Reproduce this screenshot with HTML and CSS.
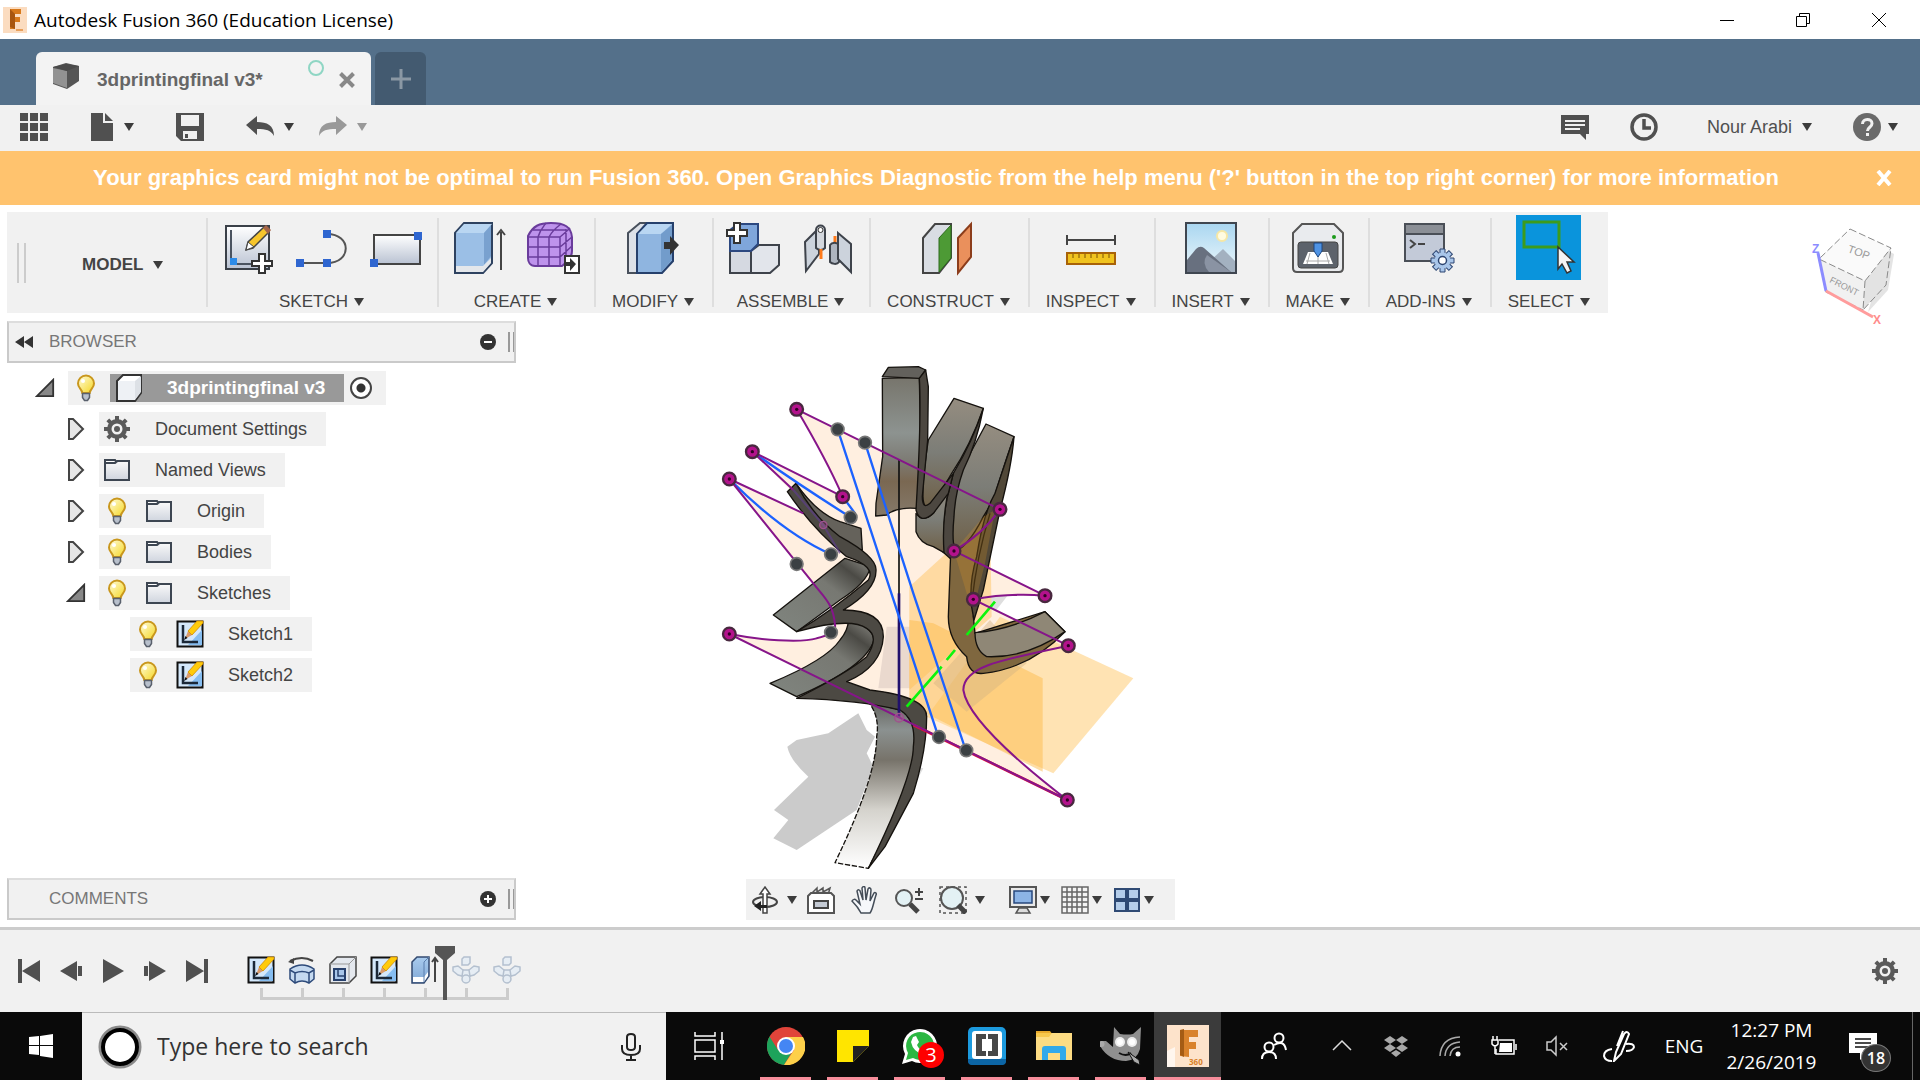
FILE: index.html
```html
<!DOCTYPE html>
<html lang="en">
<head>
    <meta charset="UTF-8">
    <meta name="viewport" content="width=device-width, initial-scale=1.0">
    <title>Autodesk Fusion 360 (Education License)</title>
    <link rel="stylesheet" href="styles.css">
</head>
<body>
    <!-- shared icons and gradients -->
    <svg class="defs" aria-hidden="true">
        <defs>
            <linearGradient id="gBlue" x1="0" y1="0" x2="0" y2="1"><stop offset="0" stop-color="#a9cbee"/><stop offset="1" stop-color="#82a9d6"/></linearGradient>
            <linearGradient id="gPaper" x1="0" y1="0" x2="0" y2="1"><stop offset="0" stop-color="#ffffff"/><stop offset="1" stop-color="#b9c2d2"/></linearGradient>
            <linearGradient id="gSky" x1="0" y1="0" x2="0" y2="1"><stop offset="0" stop-color="#a9d6f0"/><stop offset="1" stop-color="#eef8fc"/></linearGradient>
            <linearGradient id="gBulb" x1="0" y1="0" x2="1" y2="1"><stop offset="0" stop-color="#fffde0"/><stop offset="1" stop-color="#f5d620"/></linearGradient>
            <linearGradient id="gSteel" x1="0" y1="0" x2="0" y2="1"><stop offset="0" stop-color="#77756c"/><stop offset="0.4" stop-color="#8d9390"/><stop offset="0.6" stop-color="#7d7b74"/><stop offset="0.75" stop-color="#7a6852"/><stop offset="1" stop-color="#85796a"/></linearGradient>
            <linearGradient id="gTrunk" x1="0" y1="0" x2="0" y2="1"><stop offset="0" stop-color="#62625d"/><stop offset="0.17" stop-color="#8b9190"/><stop offset="0.35" stop-color="#77736a"/><stop offset="0.65" stop-color="#d5d3cd"/><stop offset="1" stop-color="#ffffff"/></linearGradient>
            <linearGradient id="gFace" x1="0" y1="1" x2="1" y2="0"><stop offset="0" stop-color="#80857f"/><stop offset="0.6" stop-color="#777872"/><stop offset="0.8" stop-color="#4b4a45"/><stop offset="1" stop-color="#908f89"/></linearGradient>
            <linearGradient id="gWood" x1="0" y1="0" x2="0" y2="1"><stop offset="0" stop-color="#958d80"/><stop offset="0.5" stop-color="#7c7d77"/><stop offset="1" stop-color="#6f6047"/></linearGradient>
        </defs>
        <symbol id="caret" viewBox="0 0 10 8"><path d="M0 0h10L5 8z" fill="currentColor"/></symbol>
        <symbol id="bulb" viewBox="0 0 20 28">
            <path d="M10 1.500a8 8 0 0 0-8 8c0 4.500 3.800 5.500 4.300 9.500h7.400c.5-4 4.300-5 4.300-9.500a8 8 0 0 0-8-8z" fill="url(#gBulb)" stroke="#c9971d" stroke-width="2"/>
            <path d="M6.500 19.500h7v4l-2 3h-3l-2-3z" fill="#b8c0cc" stroke="#59606c" stroke-width="1.500"/>
            <circle cx="7" cy="7" r="2" fill="#fff"/>
        </symbol>
        <symbol id="folder" viewBox="0 0 28 26">
            <path d="M2 6V3h10l2 3" fill="#fff" stroke="#3d4652" stroke-width="2"/>
            <path d="M2 6h10l2-2h12v19H2z" fill="url(#gPaper)" fill-opacity=".6" stroke="#3d4652" stroke-width="2"/>
        </symbol>
        <symbol id="gear" viewBox="0 0 28 28">
            <g fill="currentColor"><path d="M12 1h4v26h-4zM1 12h26v4H1z"/><path d="M12 1h4v26h-4zM1 12h26v4H1z" transform="rotate(45 14 14)"/><circle cx="14" cy="14" r="10"/></g>
            <circle cx="14" cy="14" r="5.500" fill="#f1f1f1"/><circle cx="14" cy="14" r="3" fill="currentColor"/>
        </symbol>
        <symbol id="sketch" viewBox="0 0 28 28">
            <rect x="1.500" y="1.500" width="25" height="25" fill="#d4e8fb" stroke="#111" stroke-width="2"/>
            <path d="M26 10v15H12z" fill="#86bdf0"/>
            <path d="M7 5v17h15" fill="none" stroke="#1b2838" stroke-width="2.500"/>
            <path d="M9 19l3-8 4 4z" fill="#d99a6a"/><path d="M12 11L21 1l6 0v2L16 15z" fill="#ffcb0a" stroke="#d08a00" stroke-width=".8"/><path d="M8 20l1.500-4 2 2z" fill="#111"/>
        </symbol>
        <symbol id="arrowClosed" viewBox="0 0 18 24"><path d="M2 2h4l10 10L6 22H2z" fill="#e6e6e6" stroke="#444" stroke-width="2"/></symbol>
        <symbol id="arrowOpen" viewBox="0 0 22 22"><path d="M20 2v18H2z" fill="#888" stroke="#333" stroke-width="2"/></symbol>
        <symbol id="joint" viewBox="0 0 28 28"><g fill="#e6edf4" stroke="#b4c0cf" stroke-width="1.500"><path d="M10 14h8v6h-8z"/><path d="M10 3l2-2h6v6l-2 2h-6zM1 11l5-1 5 4-1 6-4-1-5-4zM27 11l-5-1-5 4 1 6 4-1 5-4z"/><circle cx="14" cy="23" r="4"/></g></symbol>
    </svg>

    <header class="titlebar">
        <svg class="app-logo" viewBox="0 0 24 26"><rect width="24" height="26" fill="#fbdcc0"/><path d="M7 2h11v5h-6v3h5v5h-5v7H7z" fill="#d87a1c"/><path d="M7 2l5 5v15l-5-2z" fill="#a8560f"/><path d="M13 23h7" stroke="#e8a05c" stroke-width="2"/></svg>
        <h1 class="title">Autodesk Fusion 360 (Education License)</h1>
        <div class="window-buttons">
            <button type="button" aria-label="Minimize"><svg viewBox="0 0 16 16"><path d="M1 8.500h14"/></svg></button>
            <button type="button" aria-label="Restore"><svg viewBox="0 0 16 16"><path d="M1.500 4.500h10v10h-10zM4.500 4V1.500h10v10H12"/></svg></button>
            <button type="button" aria-label="Close"><svg viewBox="0 0 16 16"><path d="M1 1l14 14M15 1L1 15"/></svg></button>
        </div>
    </header>

    <nav class="tabs">
        <div class="tab">
            <svg class="tab-cube" viewBox="0 0 28 26"><path d="M1 4l13-4 13 3v15l-12 8L1 21z" fill="#555"/><path d="M1 5l14 3v17L1 20z" fill="#929292"/><path d="M1 4l13-3 13 2-12 5z" fill="#4a4a4a"/></svg>
            <span class="tab-name">3dprintingfinal v3*</span>
            <span class="tab-status"></span>
            <button type="button" class="tab-close" aria-label="Close tab"><svg viewBox="0 0 16 16"><path d="M1.500 1.500l13 13M14.500 1.500l-13 13"/></svg></button>
        </div>
        <button type="button" class="tab-add" aria-label="New tab"><svg viewBox="0 0 20 20"><path d="M10 0v20M0 10h20"/></svg></button>
    </nav>

    <div class="quickbar">
        <button type="button" aria-label="Data panel"><svg class="i28" viewBox="0 0 28 28"><path d="M0 0h8v8H0zM10 0h8v8h-8zM20 0h8v8h-8zM0 10h8v8H0zM10 10h8v8h-8zM20 10h8v8h-8zM0 20h8v8H0zM10 20h8v8h-8zM20 20h8v8h-8z"/></svg></button>
        <button type="button" class="file" aria-label="File"><svg class="i24" viewBox="0 0 24 28"><path d="M1 0h12v10h10v18H1z"/><path d="M15 0l8 8h-8z"/></svg><svg class="caret"><use href="#caret"/></svg></button>
        <button type="button" aria-label="Save"><svg class="i28" viewBox="0 0 28 28"><path fill-rule="evenodd" d="M0 0h28v28H5l-5-5zM5 2v11h18V2zM7 18v8h14v-8z"/><path d="M9 21h3v4H9z"/></svg></button>
        <div class="history">
            <button type="button" aria-label="Undo"><svg class="i28" viewBox="0 0 28 28"><path d="M0 12l11-9v6c10 0 17 3 17 14-3-6-8-7-17-7v6z"/></svg><svg class="caret"><use href="#caret"/></svg></button>
            <button type="button" class="faded" aria-label="Redo"><svg class="i28" viewBox="0 0 28 28"><path d="M28 12L17 3v6C7 9 0 12 0 23c3-6 8-7 17-7v6z"/></svg><svg class="caret"><use href="#caret"/></svg></button>
        </div>
        <div class="account">
            <button type="button" aria-label="Comments"><svg class="i28" viewBox="0 0 28 28"><path d="M0 2h28v19h-3v6l-6-6H0z"/><path d="M4 8h20M4 12h20M4 16h15" stroke="#f1f1f1" stroke-width="2"/></svg></button>
            <button type="button" aria-label="Job status"><svg class="i28" viewBox="0 0 28 28"><circle cx="14" cy="14" r="12" fill="none" stroke="currentColor" stroke-width="3.500"/><path d="M14 6v9h7" fill="none" stroke="currentColor" stroke-width="3.500"/></svg></button>
            <button type="button" class="user">Nour Arabi<svg class="caret"><use href="#caret"/></svg></button>
            <button type="button" class="help" aria-label="Help"><svg class="i28" viewBox="0 0 28 28"><circle cx="14" cy="14" r="14" fill="#6a6a6a"/><path d="M9.500 11c0-6 9.500-6 9.500-.5 0 4-4.500 3.500-4.500 7.500" fill="none" stroke="#f1f1f1" stroke-width="3"/><path d="M13 20h3v3h-3z" fill="#f1f1f1"/></svg><svg class="caret"><use href="#caret"/></svg></button>
        </div>
    </div>

    <div class="banner" role="alert">
        <p>Your graphics card might not be optimal to run Fusion 360. Open Graphics Diagnostic from the help menu ('?' button in the top right corner) for more information</p>
        <button type="button" aria-label="Dismiss"><svg viewBox="0 0 16 16"><path d="M2 1l12 14M14 1L2 15"/></svg></button>
    </div>

    <div class="ribbon-row">
        <div class="ribbon">
            <div class="workspace-switch">
                <span class="grip"></span>
                <button type="button" class="model">MODEL<svg class="caret"><use href="#caret"/></svg></button>
            </div>
            <section class="group">
                <div class="tools">
                    <button type="button" aria-label="Create Sketch"><svg viewBox="0 0 52 52"><rect x="4" y="4" width="43" height="43" fill="url(#gPaper)" stroke="#3a4048" stroke-width="2"/><path d="M9 8v34h25" fill="none" stroke="#4a5360" stroke-width="2"/><path d="M8 36h7v7H8z" fill="#2c8be8"/><path d="M24 28l2-8L42 5l5 5-16 16z" fill="#f6c52c" stroke="#444" stroke-width="1.500"/><path d="M24 28l2-8 6 5z" fill="#fff" stroke="#444"/><path d="M41 6l3-3 5 5-3 4z" fill="#a5664a"/><path d="M37 32h6v7h7v5h-7v7h-6v-7h-7v-5h7z" fill="#fff" stroke="#333" stroke-width="2"/></svg></button>
                    <button type="button" aria-label="Line"><svg viewBox="0 0 52 52"><path d="M4 41h27c25 0 25-29 0-29" fill="none" stroke="#555" stroke-width="2"/><path d="M0 37h8v8H0zM27 37h8v8h-8zM27 8h8v8h-8z" fill="#2f66d0"/></svg></button>
                    <button type="button" aria-label="Rectangle"><svg viewBox="0 0 52 52"><rect x="4" y="13" width="46" height="29" fill="url(#gPaper)" stroke="#444" stroke-width="2"/><path d="M44 10h8v8h-8zM0 37h8v8H0z" fill="#2f66d0"/></svg></button>
                </div>
                <button type="button" class="menu">SKETCH<svg class="caret"><use href="#caret"/></svg></button>
            </section>
            <section class="group">
                <div class="tools">
                    <button type="button" aria-label="Extrude"><svg viewBox="0 0 52 52"><path d="M2 11l9-10h28v40L30 51H2z" fill="#9bbfe6" stroke="#2e4260" stroke-width="2"/><path d="M3 11h28l8-9H11z" fill="#b9d6f2"/><path d="M31 11v32l7-9V3z" fill="#79a1cf"/><path d="M3 44h27l8-8v5l-8 9H3z" fill="#e4e7eb"/><path d="M48 48V10M44 13l4-5 4 5" fill="none" stroke="#444" stroke-width="2"/></svg></button>
                    <button type="button" aria-label="Create Form"><svg viewBox="0 0 52 52"><path d="M1 14C6 4 12 1 24 1c14 0 20 4 21 14v14c0 6-6 12-10 15H8c-5 0-7-4-7-8z" fill="#be93ec" stroke="#6a3c9c" stroke-width="2"/><path d="M1 15h32v29M11 15v29M22 15v29M1 25h32l12-10M1 35h32l12-11M11 15c2-7 5-10 8-14M22 15c3-6 8-10 12-13M6 8h33M33 15c5-4 8-7 10-9M39 7v31" fill="none" stroke="#6a3c9c" stroke-width="1.500"/><rect x="38" y="34" width="14" height="17" fill="#fff" stroke="#333" stroke-width="2"/><path d="M38 40h5v-4l6 6-6 7v-5h-5z" fill="#333"/></svg></button>
                </div>
                <button type="button" class="menu">CREATE<svg class="caret"><use href="#caret"/></svg></button>
            </section>
            <section class="group">
                <div class="tools">
                    <button type="button" aria-label="Press Pull"><svg viewBox="0 0 52 52"><path d="M1 11L13 1h8v50H1z" fill="#dde1e8" stroke="#48505c" stroke-width="2"/><path d="M10 12L20 1h26v38L35 51H10z" fill="#8fb5e0" stroke="#26406c" stroke-width="2"/><path d="M11 12h23L45 2H21z" fill="#b9d6f2"/><path d="M34 12v38l11-12V3z" fill="#729ccb"/><path d="M37 20h6v-6l9 9-9 10v-6h-6z" fill="#333"/></svg></button>
                </div>
                <button type="button" class="menu">MODIFY<svg class="caret"><use href="#caret"/></svg></button>
            </section>
            <section class="group">
                <div class="tools">
                    <button type="button" aria-label="New Component"><svg viewBox="0 0 52 52"><path d="M2 29h21v22H2z" fill="#d5d9e1" stroke="#3e434b" stroke-width="2"/><path d="M23 29l8-6h20v20l-9 8H23z" fill="#e2e5eb" stroke="#3e434b" stroke-width="2"/><path d="M2 8l8-6h20v20l-7 7H2z" fill="#7fa6db" stroke="#2c4880" stroke-width="2"/><path d="M6 1h6v7h7v6h-7v7H6v-7h-7V8h7z" fill="#fff" stroke="#333" stroke-width="2"/></svg></button>
                    <button type="button" aria-label="Joint"><svg viewBox="0 0 52 52"><path d="M3 20l14-14v26L4 49z" fill="#ccd3dc" stroke="#3e434b" stroke-width="2"/><path d="M14 8c0-6 9-6 9 0v18c-3 3-7 2-9 0z" fill="#d3d7dd" stroke="#3e434b" stroke-width="2"/><circle cx="18.500" cy="8" r="2.500" fill="#fff" stroke="#333"/><path d="M19 27v10M33 14v12" stroke="#ff7a1a" stroke-width="3"/><path d="M28 23c2-3 7-3 9 0v17c-2 3-7 2-9 0z" fill="#aeb5bf" stroke="#3e434b" stroke-width="2"/><path d="M36 11l13 11v28L36 37z" fill="#ccd3dc" stroke="#3e434b" stroke-width="2"/></svg></button>
                </div>
                <button type="button" class="menu">ASSEMBLE<svg class="caret"><use href="#caret"/></svg></button>
            </section>
            <section class="group">
                <div class="tools">
                    <button type="button" aria-label="Offset Plane"><svg viewBox="0 0 52 52"><path d="M1 16L13 2h16v34L17 51H1z" fill="#d9dde3" stroke="#444" stroke-width="2"/><path d="M17 16L29 3v33L17 50z" fill="#4d9a35" stroke="#2c6a1c"/><path d="M36 16L49 2v33L36 51z" fill="#ea905c" stroke="#8c3d1b" stroke-width="2"/></svg></button>
                </div>
                <button type="button" class="menu">CONSTRUCT<svg class="caret"><use href="#caret"/></svg></button>
            </section>
            <section class="group">
                <div class="tools">
                    <button type="button" aria-label="Measure"><svg viewBox="0 0 52 52"><path d="M2 18h48M2 13v10M50 13v10" stroke="#444" stroke-width="2"/><rect x="2" y="31" width="48" height="11" fill="#f0c31f" stroke="#a86208" stroke-width="2"/><path d="M8 32v4M14 32v4M20 32v4M26 32v4M32 32v4M38 32v4M44 32v4" stroke="#7a5205"/></svg></button>
                </div>
                <button type="button" class="menu">INSPECT<svg class="caret"><use href="#caret"/></svg></button>
            </section>
            <section class="group">
                <div class="tools">
                    <button type="button" aria-label="Decal"><svg viewBox="0 0 52 52"><rect x="1" y="1" width="50" height="50" fill="url(#gSky)" stroke="#3f4650" stroke-width="2"/><circle cx="37" cy="14" r="5" fill="#fffbe0" stroke="#f6e7a5" stroke-width="2"/><path d="M24 40l14-13 12 12v11H24z" fill="#a3b1c0"/><path d="M2 38l9-11q4-4 8-1l27 24H2z" fill="#68707f"/><path d="M22 33q-6 8 2 17h22z" fill="#8a93a3"/></svg></button>
                </div>
                <button type="button" class="menu">INSERT<svg class="caret"><use href="#caret"/></svg></button>
            </section>
            <section class="group">
                <div class="tools">
                    <button type="button" aria-label="3D Print"><svg viewBox="0 0 52 52"><path d="M1 11l9-9h32l9 9v35q0 4-4 4H5q-4 0-4-4z" fill="#e9ebee" stroke="#555" stroke-width="2"/><rect x="6" y="20" width="40" height="26" rx="3" fill="#5c626b" stroke="#444"/><path d="M16 30h20l5 12H11z" fill="#fff"/><path d="M14 39h24M18 31l-3 11M26 31v11M34 31l3 11" stroke="#aaa"/><path d="M22 21h8v8l-4 6-4-6z" fill="#4f93e4" stroke="#1c4680"/><circle cx="42" cy="15" r="2" fill="#1a9a1a"/></svg></button>
                </div>
                <button type="button" class="menu">MAKE<svg class="caret"><use href="#caret"/></svg></button>
            </section>
            <section class="group">
                <div class="tools">
                    <button type="button" aria-label="Scripts and Add-Ins"><svg viewBox="0 0 52 52"><rect x="2" y="2" width="39" height="37" fill="#c3cad8" stroke="#4a4f57" stroke-width="2"/><path d="M3 3h37v8H3z" fill="#8b8f96"/><path d="M3 12h37" stroke="#4a4f57" stroke-width="2"/><path d="M7 18l5 4-5 4M15 22h7" fill="none" stroke="#444" stroke-width="2"/><g fill="#a9c6ea" stroke="#2c4470"><path d="M37 27h5v23h-5zM28 36h23v5H28z"/><path d="M37 27h5v23h-5zM28 36h23v5H28z" transform="rotate(45 39.500 38.500)"/></g><circle cx="39.500" cy="38.500" r="8" fill="#a9c6ea"/><circle cx="39.500" cy="38.500" r="4" fill="#fff" stroke="#2c4470" stroke-width="1.500"/></svg></button>
                </div>
                <button type="button" class="menu">ADD-INS<svg class="caret"><use href="#caret"/></svg></button>
            </section>
            <section class="group">
                <div class="tools">
                    <button type="button" class="active" aria-label="Select"><svg viewBox="0 0 52 52"><rect x="1" y="0" width="35" height="25" fill="none" stroke="#3d9b1d" stroke-width="3"/><path d="M35 25v22l4-5 5 9 4-2-4-9h7z" fill="#f4f4f4" stroke="#333" stroke-width="1.500"/></svg></button>
                </div>
                <button type="button" class="menu">SELECT<svg class="caret"><use href="#caret"/></svg></button>
            </section>
        </div>

        <svg class="viewcube" viewBox="1808 224 96 104">
            <path d="M1885 250l8 4-6 36-20 22z" fill="#e4e4e4"/>
            <path d="M1849 229l41 19-26 33-46-22z" fill="#fafafa"/><path d="M1818 259l46 22-2 29-37-18z" fill="#f1f1f1"/><path d="M1890 248l-26 33-2 29 23-25z" fill="#e3e3e3"/>
            <path d="M1849 229l41 19-26 33-46-22zM1864 281l-2 29 23-25 5-37M1818 259l7 33 37 18" fill="none" stroke="#8a8a8a" stroke-dasharray="7 3"/>
            <path d="M1817 253l8 38" stroke="#8c8cff" stroke-width="3"/><path d="M1825 291l47 26" stroke="#ff9c9c" stroke-width="3"/>
            <text x="1846" y="252" transform="rotate(20 1846 252)" fill="#999">TOP</text>
            <text x="1828" y="282" transform="rotate(27 1828 282)" class="small" fill="#999">FRONT</text>
            <text x="1811" y="253" class="axis" fill="#8c8cff">Z</text><text x="1872" y="324" class="axis" fill="#ff8c8c">X</text>
        </svg>
    </div>

    <main class="workspace">
        <aside class="side">
            <div class="panel">
                <button type="button" aria-label="Collapse"><svg class="rewind" viewBox="0 0 18 12"><path d="M9 0v12L0 6zM18 0v12L9 6z"/></svg></button>
                <h2>BROWSER</h2>
                <button type="button" aria-label="Minus"><svg class="i16" viewBox="0 0 16 16"><circle cx="8" cy="8" r="8"/><path d="M4 8h8" stroke="#fff" stroke-width="2"/></svg></button>
                <span class="panel-grip"></span>
            </div>
            <ul class="tree">
                <li class="level0">
                    <button type="button" class="toggle" aria-label="Collapse"><svg class="open"><use href="#arrowOpen"/></svg></button>
                    <div class="node root">
                        <svg class="bulb"><use href="#bulb"/></svg>
                        <span class="selected"><svg class="i28" viewBox="0 0 28 28"><path d="M2 7l6-6h18v18l-6 8H2z" fill="#fff" stroke="#333" stroke-width="2"/><path d="M20 7v19l6-8V2z" fill="#dde1e6"/><path d="M3 7h17v19H3z" fill="#eef1f5"/></svg><b>3dprintingfinal v3</b></span>
                        <input type="radio" class="activate" aria-label="Activate component" checked>
                    </div>
                </li>
                <li><button type="button" class="toggle" aria-label="Expand"><svg class="closed"><use href="#arrowClosed"/></svg></button><div class="node"><svg class="gear"><use href="#gear"/></svg><span>Document Settings</span></div></li>
                <li><button type="button" class="toggle" aria-label="Expand"><svg class="closed"><use href="#arrowClosed"/></svg></button><div class="node"><svg class="folder"><use href="#folder"/></svg><span>Named Views</span></div></li>
                <li><button type="button" class="toggle" aria-label="Expand"><svg class="closed"><use href="#arrowClosed"/></svg></button><div class="node"><svg class="bulb"><use href="#bulb"/></svg><svg class="folder"><use href="#folder"/></svg><span>Origin</span></div></li>
                <li><button type="button" class="toggle" aria-label="Expand"><svg class="closed"><use href="#arrowClosed"/></svg></button><div class="node"><svg class="bulb"><use href="#bulb"/></svg><svg class="folder"><use href="#folder"/></svg><span>Bodies</span></div></li>
                <li><button type="button" class="toggle" aria-label="Collapse"><svg class="open"><use href="#arrowOpen"/></svg></button><div class="node"><svg class="bulb"><use href="#bulb"/></svg><svg class="folder"><use href="#folder"/></svg><span>Sketches</span></div></li>
                <li class="level2"><div class="node"><svg class="bulb"><use href="#bulb"/></svg><svg class="i28"><use href="#sketch"/></svg><span>Sketch1</span></div></li>
                <li class="level2"><div class="node"><svg class="bulb"><use href="#bulb"/></svg><svg class="i28"><use href="#sketch"/></svg><span>Sketch2</span></div></li>
            </ul>
            <div class="panel comments">
                <h2>COMMENTS</h2>
                <button type="button" aria-label="Add comment"><svg class="i16" viewBox="0 0 16 16"><circle cx="8" cy="8" r="8"/><path d="M4 8h8M8 4v8" stroke="#fff" stroke-width="2"/></svg></button>
                <span class="panel-grip"></span>
            </div>
        </aside>

        <div class="canvas">
            <svg class="model-view" viewBox="-30 -87 1620 1674" role="img" aria-label="3D model">
                <!-- ground shadow -->
                <path d="M475 1090L500 1140L525 1160L500 1210L520 1250L470 1380L290 1500L220 1465L265 1410L222 1380L325 1280Q270 1230 262 1190L290 1170L385 1150Z" fill="#cbcbcb"/>
                <path d="M870 690L940 715L850 830L830 700ZM650 1250L670 1255L630 1330Z" fill="#dedede"/>
                <!-- sketch profile -->
                <path d="M290 178L900 478Q850 550 762 603L1035 737Q930 728 820 748L1105 887C900 930 790 950 790 1020C800 1090 920 1210 1102 1350L88 852C180 870 300 880 350 865Q410 850 405 825C400 760 370 740 340 700L88 387L370 520L157 305L428 440Q380 330 290 178Z" fill="#ffefe0"/>
                <path d="M560 830L630 830V1015L535 1015Z" fill="#ead9ce"/>
                <path d="M900 800L1300 985L1060 1270L680 1100Z" fill="#ffd48a" fill-opacity=".65"/>
                <path d="M628 710L760 590L870 500L875 800L628 1020Z" fill="#ffd592" fill-opacity=".8"/>
                <path d="M628 810L700 820L1028 985V1265L628 1065Z" fill="#fdbb4c" fill-opacity=".5"/>
                <path d="M700 1000L870 810L980 940L800 1085Z" fill="#d5b483" fill-opacity=".45"/>
                <!-- fingers -->
                <g stroke="#15120e" stroke-width="4" stroke-linejoin="round">
                    <path d="M762 145L850 175Q810 290 755 370Q710 450 680 470Q655 470 685 270Z" fill="url(#gWood)"/>
                    <path d="M858 222L942 260Q900 380 875 470Q830 570 785 600Q750 600 755 520Q760 400 800 330Z" fill="url(#gWood)"/>
                    <path d="M850 175Q830 280 790 360Q765 430 762 500Q755 570 765 605L750 625L728 605Q725 500 750 410L760 370Q820 270 850 175Z" fill="#4c4740"/>
                    <path d="M648 490Q670 520 700 490L748 410Q725 500 732 608L700 590Q660 580 648 545Z" fill="url(#gWood)"/>
                    <path d="M547 85L658 82L662 300L650 475Q590 470 560 495L527 498L528 460L548 320Z" fill="url(#gSteel)"/>
                    <path d="M547 80L565 52L655 50L677 60L658 85Z" fill="#63615c"/>
                    <path d="M658 85L677 60L685 110L683 270L667 440Q667 480 690 460L760 370L745 430L700 490Q660 525 648 480Q665 200 658 85Z" fill="#4c4740"/>
                    <path d="M752 610Q800 600 850 500L880 450L850 620L820 800L825 850L1035 785L1095 845Q990 955 850 970Q805 975 800 920Q745 870 745 800Z" fill="#7f673f"/>
                    <path d="M825 848Q930 840 1035 785L1095 845Q980 925 860 920Q825 900 825 848Z" fill="#8f8776"/>
                    <path d="M942 260Q935 350 900 480L850 720L822 810Q800 720 830 620Q850 490 885 430Q915 340 942 260Z" fill="#514838"/>
                    <path d="M870 490Q830 620 815 760" fill="none"/>
                </g>
                <path d="M762 603L850 500L885 480L855 640L825 760L800 730Z" fill="#e79c20" fill-opacity=".22"/>
                <!-- left ribbon -->
                <g stroke="#15120e" stroke-width="4" stroke-linejoin="round">
                    <path d="M288 400Q350 490 420 515L483 535L487 600L430 595L310 450Z" fill="#65625b"/>
                    <path d="M220 795L435 625L512 650Q500 700 420 750L290 845Z" fill="url(#gFace)"/>
                    <path d="M445 810Q520 830 522 870Q500 950 290 1040L210 1000Q380 930 420 870Q445 840 445 810Z" fill="url(#gFace)"/>
                    <path d="M505 1055L600 1080Q650 1110 645 1190Q640 1300 505 1555L405 1538Q530 1280 530 1160Q540 1100 505 1055Z" fill="url(#gTrunk)" stroke-dasharray="16 5"/>
                    <path d="M262 425L288 400Q340 500 420 560Q530 620 528 660Q530 720 430 780Q550 780 550 860Q545 950 440 995L510 1020Q680 1040 680 1100Q680 1200 640 1330L555 1490L505 1555Q640 1280 640 1190Q650 1110 600 1080Q480 1050 290 1045Q440 970 500 920Q540 860 500 835Q450 800 290 845Q400 780 505 690Q530 650 440 620Q340 540 262 425Z" fill="#4c4943"/>
                </g>
                <!-- axes -->
                <path d="M597 330V800" stroke="#111" stroke-width="5"/>
                <path d="M597 730V1100" stroke="#20106c" stroke-width="8"/>
                <path d="M620 1070L725 950M740 930L765 900M800 855L885 755" stroke="#0cf50c" stroke-width="8"/>
                <path d="M640 1125L1102 1350" stroke="#e0103a" stroke-width="8"/>
                <!-- sketch curves -->
                <g fill="none" stroke="#1c62ff" stroke-width="7">
                    <path d="M413 238L597 800L715 1160M495 278L640 730L797 1200M157 305Q290 400 452 502M428 440L465 490M88 387Q250 550 393 613"/>
                </g>
                <g fill="none" stroke="#86158a" stroke-width="6">
                    <path d="M290 178L900 478Q850 550 762 603L1035 737Q930 728 820 748L1105 887C900 930 790 950 790 1020C800 1090 920 1210 1102 1350L88 852"/>
                    <path d="M88 852C180 870 300 880 350 865Q410 850 405 825C400 760 370 740 340 700L88 387L310 490M157 305L280 420M157 305L428 440Q380 330 290 178"/>
                    <path d="M280 420L370 525L420 610" stroke="#5c3f86" stroke-opacity=".7"/>
                </g>
                <g fill="#3b4043" stroke="#777" stroke-width="5"><circle cx="413" cy="238" r="19"/><circle cx="495" cy="278" r="19"/><circle cx="452" cy="502" r="19"/><circle cx="393" cy="613" r="19"/><circle cx="290" cy="642" r="19"/><circle cx="393" cy="847" r="19"/><circle cx="717" cy="1161" r="19"/><circle cx="799" cy="1201" r="19"/></g>
                <g fill="#b3128c" stroke="#48283f" stroke-width="7"><circle cx="290" cy="178" r="19"/><circle cx="157" cy="305" r="19"/><circle cx="88" cy="387" r="19"/><circle cx="428" cy="440" r="19"/><circle cx="900" cy="478" r="19"/><circle cx="762" cy="603" r="19"/><circle cx="1035" cy="737" r="19"/><circle cx="820" cy="748" r="19"/><circle cx="1105" cy="887" r="19"/><circle cx="88" cy="852" r="19"/><circle cx="1102" cy="1350" r="19"/></g>
                <g fill="#300024"><circle cx="290" cy="178" r="5"/><circle cx="157" cy="305" r="5"/><circle cx="88" cy="387" r="5"/><circle cx="428" cy="440" r="5"/><circle cx="900" cy="478" r="5"/><circle cx="762" cy="603" r="5"/><circle cx="1035" cy="737" r="5"/><circle cx="820" cy="748" r="5"/><circle cx="1105" cy="887" r="5"/><circle cx="88" cy="852" r="5"/><circle cx="1102" cy="1350" r="5"/></g>
                <g fill="#b060a0" fill-opacity=".4" stroke="#a0508c" stroke-width="4"><circle cx="370" cy="525" r="11"/><circle cx="597" cy="1103" r="13"/></g>
            </svg>
            <div class="navbar">
                <button type="button" class="orbit" aria-label="Orbit"><svg class="i28" viewBox="0 0 28 28"><ellipse cx="14" cy="16" rx="12" ry="5" fill="none" stroke="#444" stroke-width="2"/><path d="M12 27V8H9l5-7 5 7h-3v19z" fill="#fff" stroke="#444" stroke-width="1.500"/><path d="M3 20l7-5v10zM10 19h6v3h-6z" fill="#222"/></svg><svg class="caret"><use href="#caret"/></svg></button>
                <button type="button" aria-label="Look At"><svg class="i28" viewBox="0 0 28 28"><path d="M3 9l7-7v4l6-4v4l7-4-2 7" fill="#ddd" stroke="#555" stroke-width="1.500"/><path d="M1 10l3-3h20l3 3v17H1z" fill="#fff" stroke="#555" stroke-width="2"/><path d="M7 15h14v7H7z" fill="#c4cad4" stroke="#444" stroke-width="2"/></svg></button>
                <button type="button" aria-label="Pan"><svg class="i28" viewBox="0 0 28 28"><path d="M10 27C7 21 4 18 1 15c1-2 3-2 4-1l4 4L6 5c1-2 3-1 3 0l3 9-1-12c1-2 3-2 3 0l1 12 2-11c1-2 3-1 3 1l-1 11 4-8c1-1 3 0 2 2-3 9-3 14-6 18z" fill="#f6f8fb" stroke="#444d58" stroke-width="1.500"/></svg></button>
                <button type="button" aria-label="Zoom"><svg class="i28" viewBox="0 0 28 28"><circle cx="9" cy="12" r="8" fill="#e3f1f4" stroke="#555" stroke-width="2"/><path d="M15 18l8 8" stroke="#444" stroke-width="5"/><path d="M20 6h8M24 2v8M20 13h8" stroke="#444" stroke-width="2"/></svg></button>
                <button type="button" aria-label="Fit"><svg class="i28" viewBox="0 0 28 28"><path d="M1 1h26v26H1z" fill="none" stroke="#555" stroke-width="1.500" stroke-dasharray="3 3"/><circle cx="13" cy="12" r="11" fill="#e3f1f4" stroke="#555" stroke-width="2"/><path d="M19 19l8 8" stroke="#444" stroke-width="5"/></svg><svg class="caret"><use href="#caret"/></svg></button>
                <button type="button" class="display" aria-label="Display Settings"><svg class="i28" viewBox="0 0 28 28"><path d="M1 1h26v20H1z" fill="#e8e8e8" stroke="#555" stroke-width="2"/><path d="M5 5h18v12H5z" fill="#8cb4e6" stroke="#27477c" stroke-width="1.500"/><path d="M10 22h8l3 5H7z" fill="#ddd" stroke="#555" stroke-width="1.500"/></svg><svg class="caret"><use href="#caret"/></svg></button>
                <button type="button" class="tight" aria-label="Grid and Snaps"><svg class="i28" viewBox="0 0 28 28"><path d="M1 1h26v26H1zM6 1v26M11 1v26M16 1v26M21 1v26M1 6h26M1 11h26M1 16h26M1 21h26" fill="#f4f4f4" stroke="#666" stroke-width="1.500"/></svg><svg class="caret"><use href="#caret"/></svg></button>
                <button type="button" class="tight" aria-label="Viewports"><svg class="i28" viewBox="0 0 28 28"><path d="M2 3h11v10H2zM15 3h11v10H15zM2 15h11v10H2zM15 15h11v10H15z" fill="#b4cdea" stroke="#2f4a74" stroke-width="2"/></svg><svg class="caret"><use href="#caret"/></svg></button>
            </div>
        </div>
    </main>

    <footer class="timeline">
        <div class="playback">
            <button type="button" aria-label="Go to start"><svg viewBox="0 0 24 24"><path d="M1 0h4v24H1zM23 1v22L5 12z"/></svg></button>
            <button type="button" aria-label="Step back"><svg viewBox="0 0 24 24"><path d="M18 2v20L1 12zM19 7h4v10h-4z"/></svg></button>
            <button type="button" aria-label="Play"><svg viewBox="0 0 24 24"><path d="M2 0v24l21-12z"/></svg></button>
            <button type="button" aria-label="Step forward"><svg viewBox="0 0 24 24"><path d="M6 2v20l17-10zM1 7h4v10H1z"/></svg></button>
            <button type="button" aria-label="Go to end"><svg viewBox="0 0 24 24"><path d="M19 0h4v24h-4zM1 1v22l18-11z"/></svg></button>
        </div>
        <ol class="features">
            <li><svg class="i28"><use href="#sketch"/></svg></li>
            <li><svg class="i28" viewBox="0 0 28 28"><path d="M2 5q12-6 23 0" fill="none" stroke="#444" stroke-width="2"/><path d="M0 6l6-4v6z" fill="#444"/><path d="M2 13q12-8 24 0v10l-5 4q-7-4-14 0l-5-4z" fill="#c4d9f0" stroke="#2d4a7a" stroke-width="1.500"/><path d="M2 14l5 3q7-3 14 0l5-3M7 17v10M21 17v10" fill="none" stroke="#2d4a7a" stroke-width="1.500"/></svg></li>
            <li><svg class="i28" viewBox="0 0 28 28"><path d="M1 8l7-7h19v19l-7 7H1z" fill="#e4e8ee" stroke="#444" stroke-width="1.500"/><path d="M1 8h19v19M20 8l7-7" fill="none" stroke="#999"/><path d="M5 13h11v11H5z" fill="#a8c6ea" stroke="#27406c" stroke-width="2"/><path d="M9 13v7h7" fill="none" stroke="#27406c" stroke-width="1.500"/></svg></li>
            <li><svg class="i28"><use href="#sketch"/></svg></li>
            <li><svg class="i28" viewBox="0 0 28 28"><path d="M1 6l5-5h12v19l-5 7H1z" fill="url(#gBlue)" stroke="#334a70" stroke-width="1.500"/><path d="M2 21h11l4-5v4l-4 6H2z" fill="#fff"/><path d="M13 6l5-5M13 6v20" stroke="#5b7fae"/><path d="M24 26V3M21 6l3-4 3 4" fill="none" stroke="#444" stroke-width="2"/></svg></li>
            <li><svg class="i28"><use href="#joint"/></svg></li>
            <li><svg class="i28"><use href="#joint"/></svg></li>
            <li class="marker" aria-label="Timeline marker"><svg viewBox="0 0 20 54"><path d="M0 0h20v7l-8 7v40H8V14L0 7z" fill="#555"/></svg></li>
        </ol>
        <button type="button" class="settings" aria-label="Timeline settings"><svg class="gear"><use href="#gear"/></svg></button>
    </footer>

    <div class="taskbar">
        <button type="button" class="start" aria-label="Start"><svg class="i24" viewBox="0 0 24 24"><path d="M0 3l10-1v9H0zM11 2l13-2v11H11zM0 12h10v9L0 20zM11 12h13v12l-13-2z" fill="#fff"/></svg></button>
        <label class="search">
            <svg class="cortana" viewBox="0 0 44 44"><circle cx="22" cy="22" r="20" fill="none" stroke="#8a8a8a" stroke-width="3"/><circle cx="22" cy="22" r="17" fill="#fff" stroke="#000" stroke-width="4"/></svg>
            <input type="text" placeholder="Type here to search" aria-label="Type here to search">
            <svg class="mic" viewBox="0 0 20 28"><path d="M6 4q0-3 4-3t4 3v10q0 3-4 3t-4-3zM1 12v4q0 6 9 6t9-6v-4M10 22v5M5 27h10" fill="none" stroke="#222" stroke-width="2"/></svg>
        </label>
        <div class="apps">
            <button type="button" class="taskview" aria-label="Task View"><svg class="i30" viewBox="0 0 30 30"><path d="M1 1v4h20V1M1 9h20v12H1zM1 29v-4h20v4M28 1v28" fill="none" stroke="#fff" stroke-width="1.500"/><path d="M26 9h4v4h-4z" fill="#fff"/></svg></button>
            <button type="button" class="app" aria-label="Chrome"><svg class="i38" viewBox="0 0 38 38"><circle cx="19" cy="19" r="19" fill="#e0443a"/><path d="M2.500 9.500A19 19 0 0 0 17 38l9-15H11z" fill="#1da35b"/><path d="M19 10h17a19 19 0 0 1-19 28l10-15z" fill="#fdd04a"/><circle cx="19" cy="19" r="9" fill="#fff"/><circle cx="19" cy="19" r="7" fill="#4486f4"/></svg></button>
            <button type="button" class="app" aria-label="Sticky Notes"><svg class="i32" viewBox="0 0 32 32"><path d="M0 0h32v16L16 32H0z" fill="#ffe500"/><path d="M16 32V16h16z" fill="#222"/></svg></button>
            <button type="button" class="app" aria-label="WhatsApp"><svg class="i38" viewBox="0 0 38 38"><path d="M1 37l3-10A17 17 0 1 1 11 34z" fill="#fff"/><path d="M5 33l2-7a14 14 0 1 1 5 5z" fill="#2cb742"/><path d="M12 10l3-1 3 6-2 3q2 5 7 6l3-3 5 3q-2 6-8 4-11-3-13-13z" fill="#fff"/></svg><span class="badge">3</span></button>
            <button type="button" class="app" aria-label="Brackets"><svg class="i38" viewBox="0 0 38 38"><rect width="38" height="38" rx="5" fill="#1c9ade"/><path d="M0 32h38v2q0 4-4 4H4q-4 0-4-4z" fill="#0c65a5"/><rect x="4" y="4" width="30" height="28" rx="3" fill="#fff"/><path d="M8 7h10v5h-4v12h4v5H8zM30 7H20v5h4v12h-4v5h10z" fill="#474747"/></svg></button>
            <button type="button" class="app" aria-label="File Explorer"><svg class="i38" viewBox="0 0 38 38"><path d="M1 4h14l3 4h-17z" fill="#e8a92c"/><path d="M1 6h36v27H1z" fill="#fddc83"/><path d="M1 6h16l-3 4H1z" fill="#f7c74d"/><path d="M7 33V22q0-3 3-3h18q3 0 3 3v11h-6v-7H13v7z" fill="#32a9ea"/></svg></button>
            <button type="button" class="app" aria-label="GIMP"><svg class="i42" viewBox="0 0 42 38"><path d="M14 0l6 7q8 1 13 0l8-7-1 22q-3 11-14 12Q9 34 0 19l1-5 5 0 7 6z" fill="#8f8f8f"/><circle cx="1.500" cy="17" r="3" fill="#aaa"/><circle cx="20" cy="15" r="5" fill="#eee"/><circle cx="32" cy="15" r="5" fill="#eee"/><circle cx="20" cy="15" r="3"/><circle cx="32" cy="15" r="3"/><path d="M19 26q7 4 12 0" fill="none" stroke="#111" stroke-width="2"/><path d="M28 25l11 8 1 5-6-3z" fill="#aaa" stroke="#111"/></svg></button>
            <button type="button" class="app current" aria-label="Fusion 360"><svg class="i42" viewBox="0 0 42 42"><path d="M0 0h42v42H0z" fill="#fde3cb"/><path d="M13 5h18v7h-9v5h7v7h-7v8l-9-1z" fill="#d9822b"/><path d="M13 5l4-1v28l-4-2z" fill="#a55c14"/><path d="M0 26l8-4v20H0z" fill="#fff6ee"/><text x="22" y="40" class="tiny" fill="#d9822b">360</text></svg></button>
        </div>
        <div class="tray">
            <button type="button" class="people" aria-label="People"><svg class="i28" viewBox="0 0 28 28"><g fill="none" stroke="#fff" stroke-width="2"><circle cx="19" cy="6" r="4.500"/><path d="M14 13q10-6 12 5"/><circle cx="9" cy="15" r="4.500"/><path d="M2 27q0-7 7-7t7 7"/></g></svg></button>
            <button type="button" aria-label="Show hidden icons"><svg class="i20" viewBox="0 0 20 20"><path d="M1 14l9-9 9 9" fill="none" stroke="#ddd" stroke-width="1.500"/></svg></button>
            <button type="button" aria-label="Dropbox"><svg class="i24" viewBox="0 0 24 22"><path d="M6 1l6 4-6 4-6-4zM18 1l6 4-6 4-6-4zM6 9l6 4-6 4-6-4zM18 9l6 4-6 4-6-4zM12 15l5 3-5 4-5-4z" fill="#a8a8a8"/></svg></button>
            <button type="button" aria-label="Wi-Fi"><svg class="i24" viewBox="0 0 24 24"><path d="M2 22Q3 4 22 3M7 22Q8 9 22 8M12 22q1-9 10-9" fill="none" stroke="#aaa" stroke-width="1.500"/><circle cx="20" cy="20" r="2.500" fill="#fff"/></svg></button>
            <button type="button" aria-label="Battery"><svg class="i26" viewBox="0 0 26 20"><path d="M8 4h15v14H5v-5M25 8v6" fill="none" stroke="#fff" stroke-width="1.500"/><path d="M9 7h12v9H8z" fill="#fff"/><path d="M2 0v4M6 0v4M1 4h6v4q-3 4-6 0zM4 9v9" fill="none" stroke="#fff" stroke-width="1.500"/></svg></button>
            <button type="button" aria-label="Volume muted"><svg class="i24" viewBox="0 0 24 24"><path d="M1 8h4l5-5v18l-5-5H1z" fill="none" stroke="#ccc" stroke-width="1.500"/><path d="M14 9l7 7M21 9l-7 7" stroke="#ccc" stroke-width="1.500"/></svg></button>
            <button type="button" class="ink" aria-label="Windows Ink"><svg class="i32" viewBox="0 0 32 32"><path d="M11 31l2-9L21 4q3-4 5 0l-8 20zM20 1l-6 15M9 19q-8 1-8 7 1 5 8 5M23 14q8-1 8 3-1 4-8 4" fill="none" stroke="#fff" stroke-width="2"/></svg></button>
            <button type="button" class="lang">ENG</button>
            <button type="button" class="clock"><span>12:27 PM</span><span>2/26/2019</span></button>
            <button type="button" class="notify" aria-label="Notifications"><svg class="i28" viewBox="0 0 28 28"><path d="M0 1h28v20h-9l-8 7v-7H0z" fill="#fff"/><path d="M6 7h16M6 11h16M6 15h16" stroke="#111" stroke-width="1.500"/></svg><span class="count">18</span></button>
            <button type="button" class="desktop" aria-label="Show desktop"></button>
        </div>
    </div>
</body>
</html>
```
FILE: styles.css
```css
* {
    box-sizing: border-box;
}
body {
    font-family: "Liberation Sans", Arial, sans-serif;
    font-size: 17px;
    margin: 0;
    height: 100vh;
    display: flex;
    flex-direction: column;
    overflow: hidden;
    background: #fff;
    color: #444;
}
button {
    border: none;
    background: none;
    padding: 0;
    margin: 0;
    font: inherit;
    color: inherit;
    display: flex;
    align-items: center;
    justify-content: center;
}
h1, h2, p, ul, ol {
    margin: 0;
    padding: 0;
    font-weight: normal;
}
ul, ol {
    list-style: none;
}
svg {
    display: block;
    flex: none;
    fill: currentColor;
}
.defs {
    position: absolute;
    width: 0;
    height: 0;
}

/* icon sizes */
.i16 { width: 16px; height: 16px; }
.i20 { width: 20px; height: 20px; }
.i24 { width: 24px; height: 28px; }
.i26 { width: 26px; height: 24px; }
.i28 { width: 28px; height: 28px; }
.i30 { width: 30px; height: 30px; }
.i32 { width: 32px; height: 32px; }
.i38 { width: 38px; height: 38px; }
.i42 { width: 42px; height: 42px; }
.caret { width: 10px; height: 8px; color: #3c3c3c; }
.bulb { width: 20px; height: 28px; margin: 0 8px; }
.folder { width: 28px; height: 26px; margin: 0 4px; }
.gear { width: 28px; height: 28px; color: #5a5a5a; }

/* title bar */
.titlebar {
    display: flex;
    align-items: center;
    height: 39px;
    padding: 0 3px;
    color: #000;
}
.app-logo {
    width: 24px;
    height: 26px;
}
.title {
    flex: 1;
    margin-left: 7px;
    font-family: "Open Sans", sans-serif;
    font-size: 19px;
}
.window-buttons {
    display: flex;
}
.window-buttons button {
    width: 76px;
    height: 39px;
}
.window-buttons svg {
    width: 16px;
    height: 16px;
    fill: none;
    stroke: #000;
}

/* document tabs */
.tabs {
    display: flex;
    align-items: flex-end;
    gap: 4px;
    height: 66px;
    padding-left: 36px;
    background: #54708a;
}
.tab {
    display: flex;
    align-items: center;
    height: 53px;
    padding: 2px 16px 0;
    border-radius: 6px 6px 0 0;
    background: #f3f3f3;
    color: #666;
}
.tab-cube {
    width: 28px;
    height: 26px;
    margin-bottom: 8px;
}
.tab-name {
    width: 211px;
    margin-left: 17px;
    font-size: 19px;
    font-weight: bold;
    white-space: nowrap;
}
.tab-status {
    width: 16px;
    height: 16px;
    margin-bottom: 24px;
    border: 2px solid #8fd6c4;
    border-radius: 50%;
}
.tab-close {
    margin-left: 15px;
}
.tab-close svg {
    width: 16px;
    height: 16px;
    stroke: #888;
    stroke-width: 4;
}
.tab-add {
    width: 51px;
    height: 53px;
    border-radius: 6px 6px 0 0;
    background: #435a70;
}
.tab-add svg {
    width: 20px;
    height: 20px;
    stroke: #8b98a4;
    stroke-width: 3;
}

/* quick access bar */
.quickbar {
    display: flex;
    align-items: center;
    gap: 42px;
    height: 46px;
    padding: 0 22px 2px 20px;
    background: #f1f1f1;
    color: #505050;
}
.quickbar button {
    gap: 10px;
}
.history {
    display: flex;
    gap: 25px;
}
.faded,
.faded .caret {
    color: #999;
}
.account {
    display: flex;
    gap: 41px;
    margin-left: auto;
}
.account .user {
    padding-left: 8px;
    font-size: 18px;
}
.account .help {
    gap: 7px;
}

/* warning */
.banner {
    display: flex;
    align-items: center;
    height: 54px;
    background: #ffc36e;
    color: #fff;
}
.banner p {
    flex: 1;
    text-align: center;
    font-size: 22px;
    font-weight: bold;
    white-space: nowrap;
}
.banner button {
    width: 70px;
    padding-right: 2px;
    margin-left: -22px;
}
.banner svg {
    width: 16px;
    height: 16px;
    stroke: #fff;
    stroke-width: 4;
}

/* ribbon */
.ribbon-row {
    display: flex;
    justify-content: space-between;
    height: 108px;
    padding: 7px 15px 0 7px;
}
.ribbon {
    display: flex;
    height: 101px;
    background: #f1f1f1;
}
.workspace-switch {
    display: flex;
    align-items: center;
    width: 199px;
    padding-left: 10px;
}
.grip {
    width: 9px;
    height: 40px;
    border-left: 2px solid #ccc;
    border-right: 2px solid #ccc;
}
.model {
    gap: 10px;
    margin-left: 56px;
    padding-top: 4px;
    font-weight: bold;
}
.group {
    position: relative;
    display: flex;
    flex-direction: column;
    align-items: center;
    padding: 3px 9px 0;
}
.group::before {
    content: "";
    position: absolute;
    left: 0;
    top: 6px;
    bottom: 6px;
    width: 2px;
    background: #dedede;
}
.tools {
    display: flex;
    gap: 9px;
}
.tools button {
    width: 65px;
    height: 65px;
}
.tools svg {
    width: 52px;
    height: 52px;
    overflow: visible;
}
.tools .active {
    background: #0a94dc;
}
.menu {
    gap: 6px;
    height: 33px;
    padding: 10px 9px 0;
}
.viewcube {
    width: 96px;
    height: 104px;
    margin-top: 12px;
    font-size: 11px;
}
.viewcube .small {
    font-size: 9px;
}
.viewcube .axis {
    font-size: 12px;
    font-weight: bold;
}

/* workspace */
.workspace {
    flex: 1;
    min-height: 0;
    display: grid;
    grid-template-columns: 1fr 540px 1fr;
    padding: 8px 0 7px;
}
.side {
    display: flex;
    flex-direction: column;
    width: 516px;
    padding-left: 7px;
}
.panel {
    display: flex;
    align-items: center;
    height: 42px;
    padding-left: 6px;
    border: 2px solid #cacaca;
    border-top-color: #ddd;
    background: #f1f1f1;
    color: #333;
}
.panel h2 {
    flex: 1;
    margin-left: 16px;
    font-size: 17px;
    color: #777;
}
.rewind {
    width: 18px;
    height: 12px;
}
.panel-grip {
    width: 6px;
    height: 20px;
    margin-left: 12px;
    border: solid #999;
    border-width: 0 1px 0 2px;
}
.comments {
    margin-top: auto;
}
.comments h2 {
    margin-left: 34px;
}
.tree {
    display: flex;
    flex-direction: column;
    gap: 7px;
    padding-top: 8px;
}
.tree li {
    display: flex;
    align-items: center;
    height: 34px;
    padding-left: 46px;
}
.tree .level0 {
    padding-left: 15px;
}
.tree .level2 {
    padding-left: 123px;
}
.toggle {
    width: 46px;
}
.open {
    width: 20px;
    height: 20px;
}
.closed {
    width: 18px;
    height: 24px;
}
.node {
    display: flex;
    align-items: center;
    gap: 6px;
    height: 34px;
    padding-right: 19px;
    background: #f1f1f1;
    font-size: 18px;
}
.node > span {
    margin-left: 14px;
}
.node > .gear,
.node > .i28 {
    margin: 0 4px;
}
.root .selected {
    display: flex;
    align-items: center;
    gap: 24px;
    height: 28px;
    margin: 0;
    padding: 0 19px 0 5px;
    background: #999;
    color: #fff;
    font-size: 19px;
}
.root {
    padding-right: 14px;
}
.activate {
    appearance: none;
    width: 22px;
    height: 22px;
    margin: 0;
    border: 2px solid #444;
    border-radius: 50%;
    background: radial-gradient(circle, #333 4px, #fff 5px);
}
.canvas {
    display: flex;
    flex-direction: column;
    align-items: center;
    min-height: 0;
}
.model-view {
    flex: 1;
    width: 100%;
    min-height: 0;
}
.navbar {
    display: flex;
    align-items: center;
    gap: 16px;
    height: 41px;
    padding: 0 21px 0 5px;
    background: #f1f1f1;
}
.navbar button {
    gap: 8px;
}
.navbar .orbit {
    margin-right: -6px;
}
.navbar .display {
    gap: 3px;
    margin-left: 8px;
}
.navbar .tight {
    gap: 3px;
    margin-left: -5px;
}

/* timeline */
.timeline {
    display: flex;
    align-items: flex-start;
    height: 85px;
    padding: 0 21px 0 8px;
    border-top: 3px solid #ccc;
    background: #f1f1f1;
}
.playback {
    display: flex;
    padding-top: 29px;
}
.playback button {
    width: 42px;
}
.playback svg {
    width: 24px;
    height: 24px;
    color: #505050;
}
.features {
    position: relative;
    display: flex;
    padding-top: 26px;
    margin-left: 22px;
}
.features li {
    width: 41px;
    height: 44px;
    display: flex;
    justify-content: center;
    background: linear-gradient(#ccc, #ccc) 20px bottom / 3px 12px no-repeat, linear-gradient(#ccc, #ccc) 0 bottom / 100% 3px no-repeat;
}
.features li:first-child {
    background-position: 20px bottom, 20px bottom;
}
.features li:nth-child(7) {
    background-size: 3px 12px, 20px 3px;
}
.features .marker {
    position: absolute;
    left: 195px;
    top: 16px;
    width: 20px;
    height: 54px;
    background: none;
}
.marker svg {
    width: 20px;
    height: 54px;
}
.settings {
    margin: 27px 0 0 auto;
}

/* taskbar */
.taskbar {
    display: flex;
    height: 68px;
    background: #0a0a0a;
    color: #fff;
    font-family: "Open Sans", sans-serif;
    font-size: 19px;
}
.start {
    width: 82px;
}
.search {
    display: flex;
    align-items: center;
    width: 584px;
    padding: 0 25px 0 16px;
    border-top: 1px solid #bbb;
    background: #f1f1f1;
}
.cortana {
    width: 44px;
    height: 44px;
}
.search input {
    flex: 1;
    border: none;
    margin: 0;
    padding: 0 0 2px 15px;
    background: none;
    font-family: inherit;
    font-size: 23px;
    outline: none;
}
.search input::placeholder {
    color: #333;
    opacity: 1;
}
.mic {
    width: 20px;
    height: 28px;
}
.apps,
.tray {
    display: flex;
}
.taskview {
    width: 86px;
}
.app {
    position: relative;
    width: 67px;
}
.app::after {
    content: "";
    position: absolute;
    left: 8px;
    right: 8px;
    bottom: 0;
    height: 3px;
    background: #f78d9b;
}
.app.current {
    background: #3b3b3b;
}
.app.current::after {
    left: 0;
    right: 0;
}
.tiny {
    font-size: 8px;
    font-weight: bold;
}
.badge {
    position: absolute;
    left: 32px;
    top: 30px;
    width: 26px;
    height: 26px;
    border-radius: 50%;
    background: #f00;
    font-size: 20px;
    line-height: 26px;
    text-align: center;
}
.tray {
    margin-left: auto;
}
.tray button {
    width: 54px;
}
.tray .people {
    width: 83px;
}
.tray .ink {
    width: 68px;
}
.tray .lang {
    width: 62px;
}
.tray .clock {
    width: 113px;
    flex-direction: column;
    line-height: 32px;
}
.tray .notify {
    position: relative;
    width: 84px;
    padding-right: 14px;
}
.count {
    position: absolute;
    left: 33px;
    top: 32px;
    width: 30px;
    height: 28px;
    border: 1px solid #777;
    border-radius: 50%;
    background: #333;
    font-size: 16px;
    font-weight: 600;
    line-height: 26px;
    text-align: center;
}
.tray .desktop {
    width: 8px;
    border-left: 1px solid #666;
}
```
